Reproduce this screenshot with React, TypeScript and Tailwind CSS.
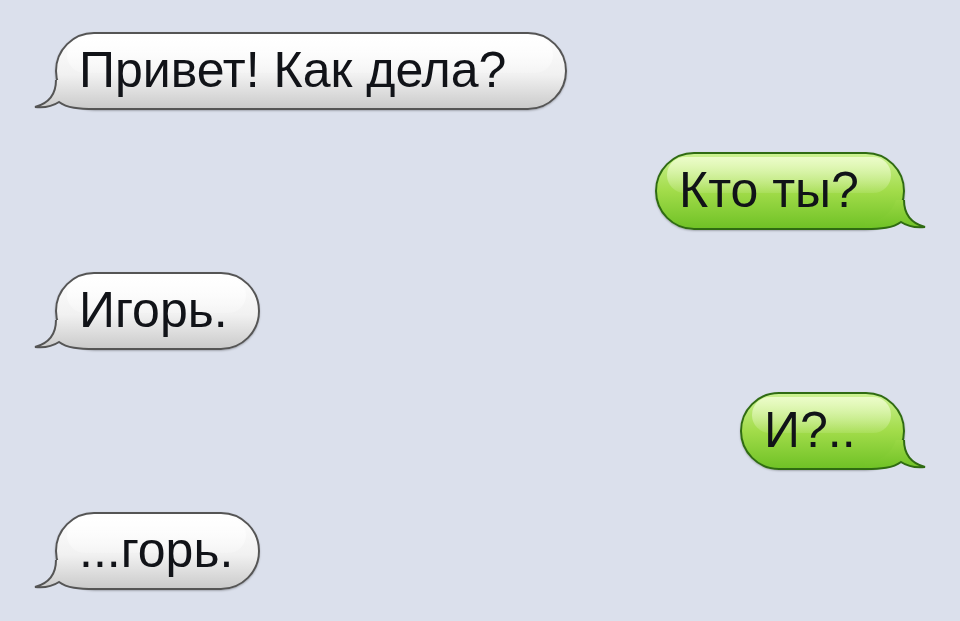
import React from 'react';
import clsx from 'clsx';

type Side = 'left' | 'right';

type Message = {
  id: number;
  side: Side;
  text: string;
  width: string;
};

const messages: Message[] = [
  { id: 1, side: 'left', text: 'Привет! Как дела?', width: 'w-[512px]' },
  { id: 2, side: 'right', text: 'Кто ты?', width: 'w-[250px]' },
  { id: 3, side: 'left', text: 'Игорь.', width: 'w-[205px]' },
  { id: 4, side: 'right', text: 'И?..', width: 'w-[165px]' },
  { id: 5, side: 'left', text: '...горь.', width: 'w-[205px]' },
];

const palette = {
  left: {
    stops: ['#ffffff', '#f1f1f1', '#cbcbcb'],
    border: '#555555',
    bubble:
      'border-[#555555] bg-[linear-gradient(to_bottom,#ffffff_0%,#f1f1f1_55%,#cbcbcb_100%)]',
    gloss: 'from-white/90 to-white/20',
  },
  right: {
    stops: ['#ccf291', '#a2dc4a', '#70c226'],
    border: '#2f6b12',
    bubble:
      'border-[#2f6b12] bg-[linear-gradient(to_bottom,#ccf291_0%,#a2dc4a_50%,#70c226_100%)]',
    gloss: 'from-[#f4ffd8]/80 to-white/10',
  },
};

// tail outline, in the bubble's own coordinates (bubble is 78px tall, left edge at x = 0)
const TAIL_EDGE = 'M 1 48 C 1 62, -5 71, -20 75 C -11 76, -2 74, 4 70 C 12 76, 24 77, 40 77';
const TAIL_FILL = `${TAIL_EDGE} L 40 70 A 31 31 0 0 1 9 48 Z`;

const Tail: React.FC<{ side: Side; id: string }> = ({ side, id }) => {
  const p = palette[side];
  return (
    <svg
      className={clsx(
        'absolute top-[40px] h-[44px] w-[70px] overflow-visible',
        side === 'left' ? 'left-[-20px]' : 'right-[-20px]'
      )}
      viewBox={side === 'left' ? '-20 40 70 44' : '-50 40 70 44'}
    >
      <defs>
        <linearGradient id={id} gradientUnits="userSpaceOnUse" x1="0" y1="2" x2="0" y2="76">
          <stop offset="0%" stopColor={p.stops[0]} />
          <stop offset="55%" stopColor={p.stops[1]} />
          <stop offset="100%" stopColor={p.stops[2]} />
        </linearGradient>
      </defs>
      <g transform={side === 'right' ? 'scale(-1,1)' : undefined}>
        <path d={TAIL_FILL} fill={`url(#${id})`} />
        <path d={TAIL_EDGE} fill="none" stroke={p.border} strokeWidth="2" />
      </g>
    </svg>
  );
};

const Bubble: React.FC<{ message: Message }> = ({ message }) => {
  const p = palette[message.side];
  return (
    <div
      className={clsx(
        'relative h-[78px] shrink-0',
        message.width,
        message.side === 'right' ? 'self-end' : 'self-start'
      )}
    >
      <div
        className={clsx(
          'relative flex h-full items-center overflow-hidden rounded-full border-2 pb-[3px] pl-[22px] shadow-[0_1px_2px_rgba(0,0,0,0.25)]',
          p.bubble
        )}
      >
        <div
          className={clsx(
            'absolute left-[10px] right-[12px] top-[3px] h-[36px] rounded-full bg-linear-to-b',
            p.gloss
          )}
        />
        <span className="relative z-10 whitespace-nowrap text-[50px] leading-none text-[#111318]">
          {message.text}
        </span>
      </div>
      <Tail side={message.side} id={`tail-${message.id}`} />
    </div>
  );
};

export default function App() {
  return (
    <div
      className="flex h-[621px] w-[960px] flex-col gap-[42px] overflow-hidden bg-[#dbe0ec] px-[55px] pt-[32px]"
      style={{ fontFamily: '"Liberation Sans", Arial, sans-serif' }}
    >
      {messages.map((m) => (
        <Bubble key={m.id} message={m} />
      ))}
    </div>
  );
}
